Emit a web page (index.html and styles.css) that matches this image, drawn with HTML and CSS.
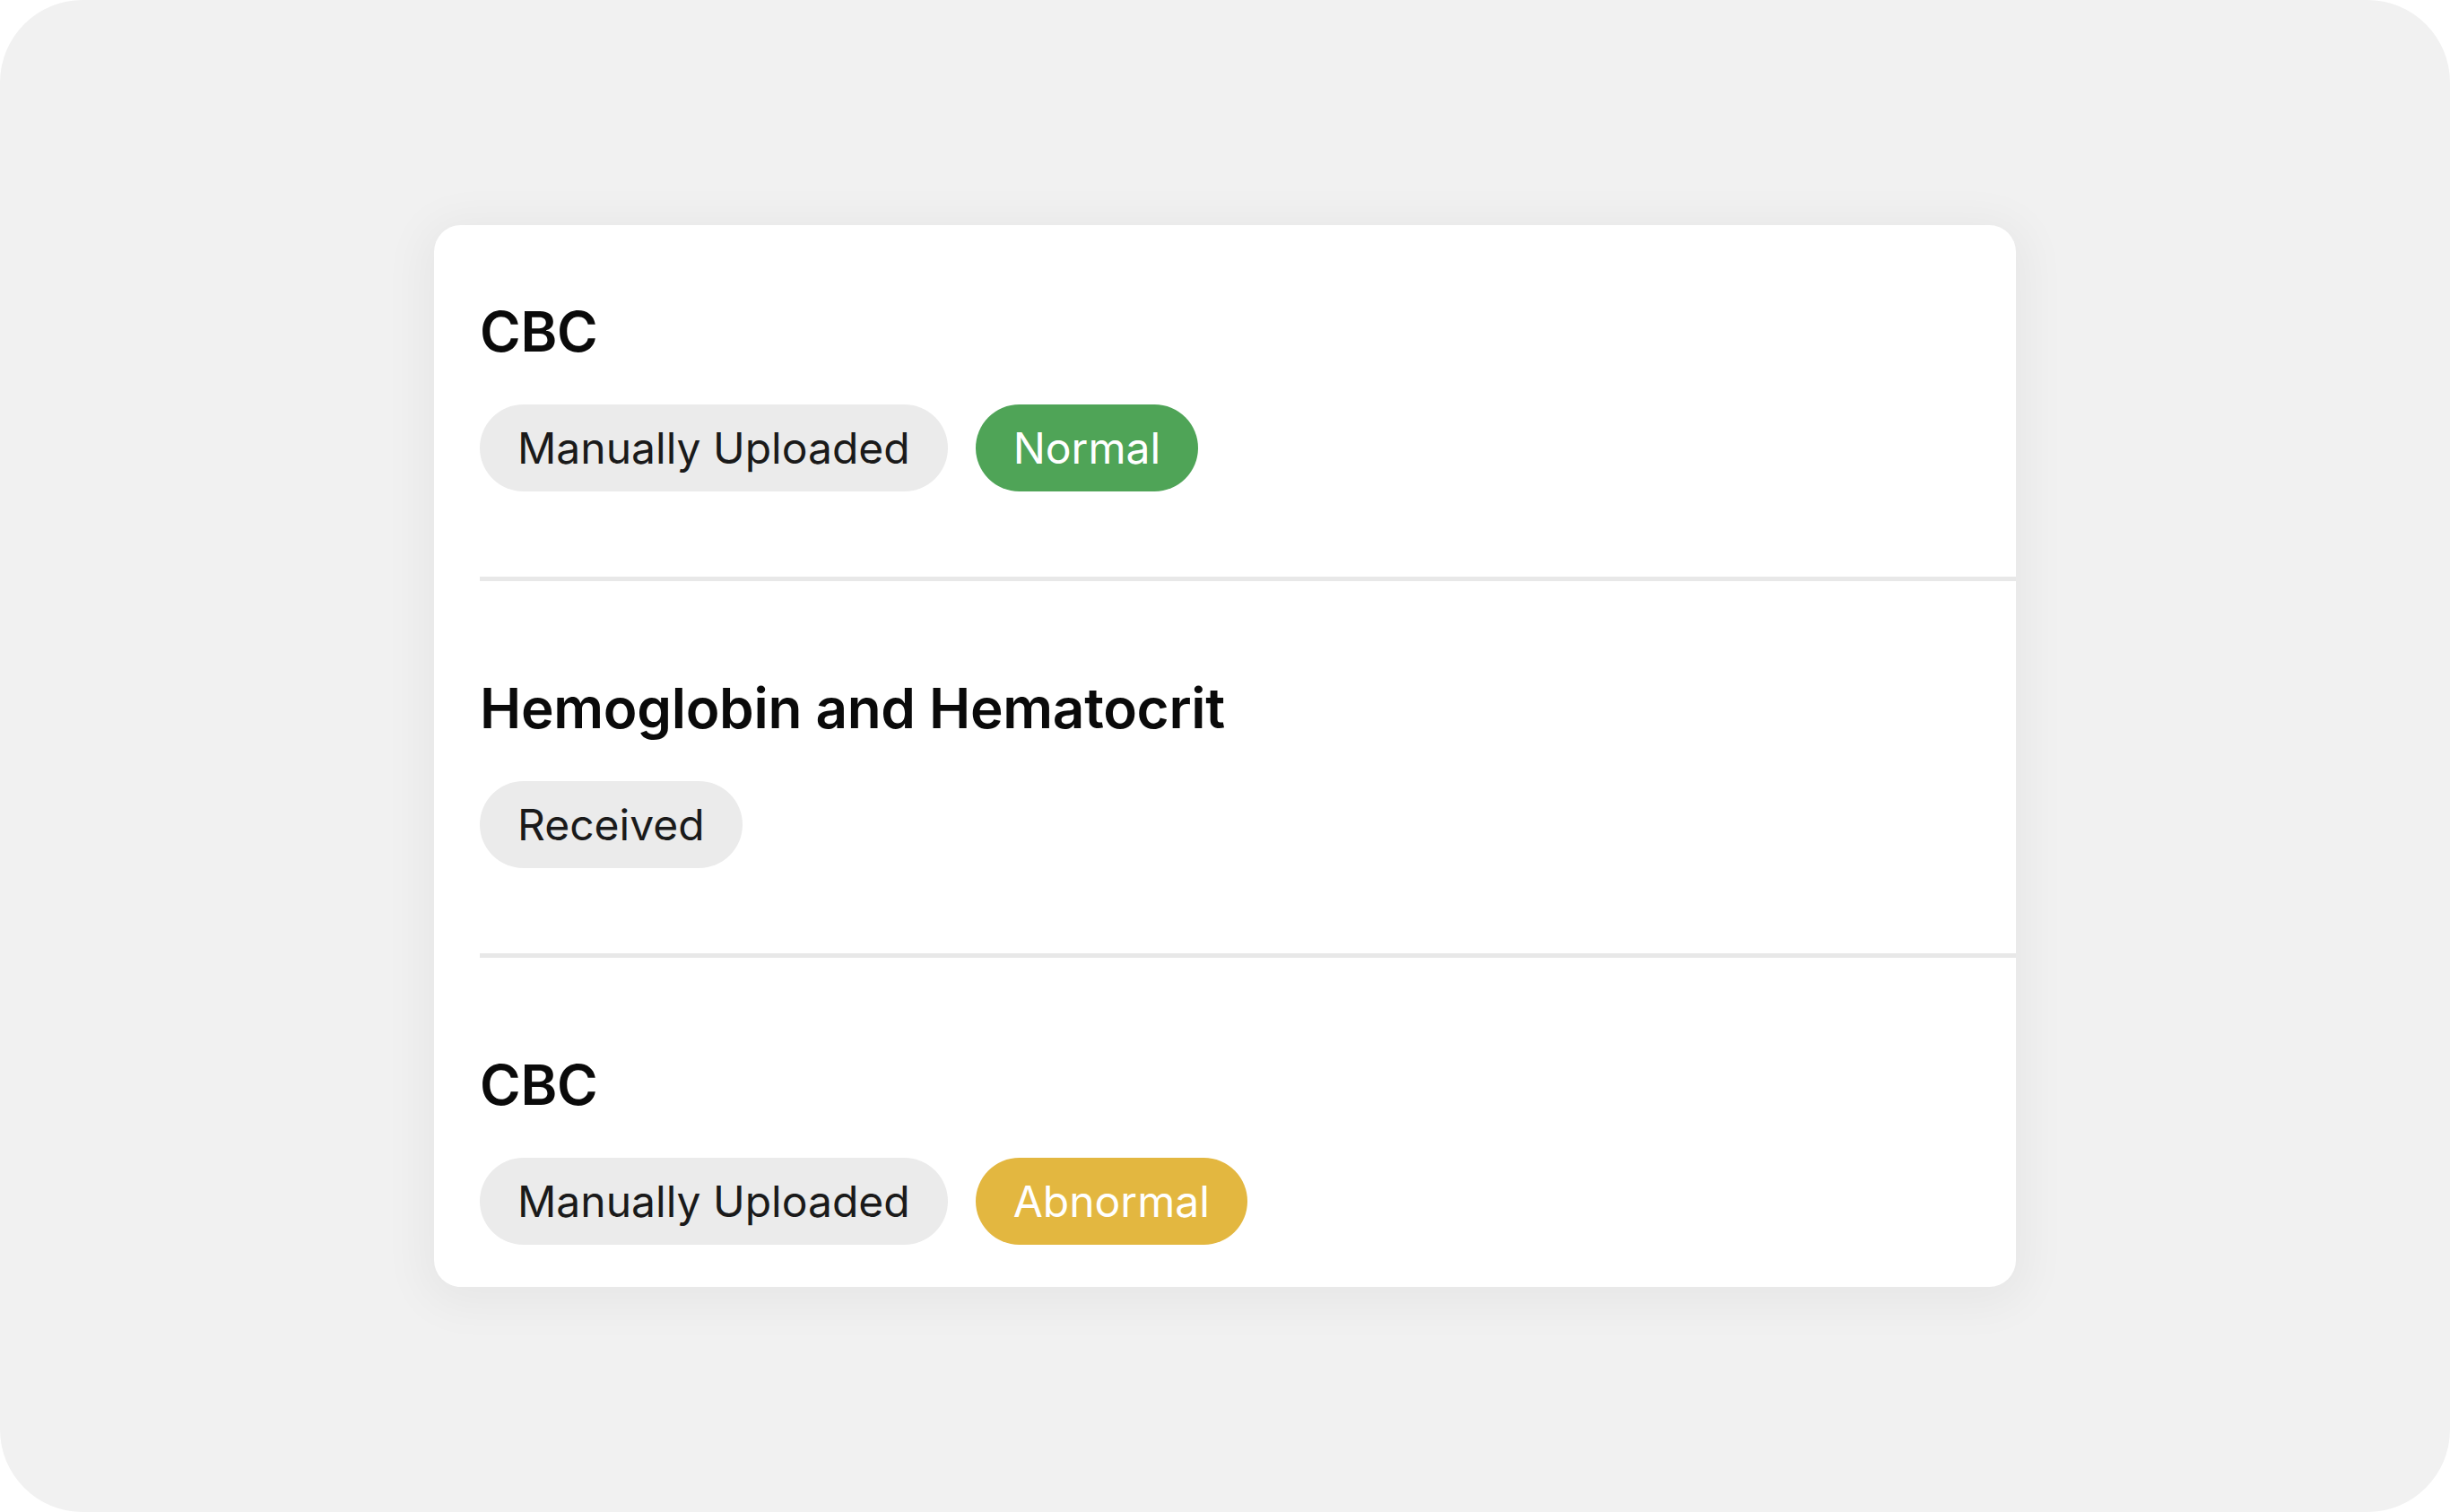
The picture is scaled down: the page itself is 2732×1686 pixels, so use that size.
FILE: index.html
```html
<!DOCTYPE html>
<html lang="en">
<head>
<meta charset="utf-8">
<title>Lab results</title>
<link rel="stylesheet" href="styles.css">
</head>
<body>
<div class="page">
  <div class="card">
    <div class="item">
      <div class="title">CBC</div>
      <div class="chips">
        <span class="chip">Manually Uploaded</span>
        <span class="chip chip-normal">Normal</span>
      </div>
    </div>
    <div class="item">
      <div class="title">Hemoglobin and Hematocrit</div>
      <div class="chips">
        <span class="chip">Received</span>
      </div>
    </div>
    <div class="item">
      <div class="title">CBC</div>
      <div class="chips">
        <span class="chip">Manually Uploaded</span>
        <span class="chip chip-abnormal">Abnormal</span>
      </div>
    </div>
  </div>
</div>
</body>
</html>
```
FILE: styles.css
```css
html, body {
  margin: 0;
  padding: 0;
  background: #ffffff;
}
.page {
  width: 2732px;
  height: 1686px;
  background: #f1f1f1;
  border-radius: 92px;
  display: flex;
  align-items: center;
  justify-content: center;
  font-family: Inter, "Noto Sans", sans-serif;
}
.card {
  width: 1764px;
  height: 1184px;
  box-sizing: border-box;
  background: #ffffff;
  border-radius: 30px;
  padding-left: 51px;
  box-shadow: 0 8px 50px 14px rgba(0, 0, 0, 0.045);
}
.item {
  padding: 105px 0 95px 0;
  border-bottom: 5px solid #e8e8e8;
}
.item:first-child {
  padding-top: 82px;
}
.item:last-child {
  border-bottom: none;
  padding-bottom: 49px;
}
.title {
  font-size: 62px;
  line-height: 74px;
  font-weight: 600;
  color: #0a0a0a;
  letter-spacing: -0.3px;
  margin-bottom: 44px;
}
.chips {
  display: flex;
  gap: 31px;
}
.chip {
  display: inline-flex;
  align-items: center;
  height: 97px;
  padding: 0 42px;
  border-radius: 999px;
  background: #ebebeb;
  color: #1a1a1a;
  font-size: 48px;
}
.chip-normal {
  background: #4fa457;
  color: #ffffff;
}
.chip-abnormal {
  background: #e3b740;
  color: #ffffff;
}
```
